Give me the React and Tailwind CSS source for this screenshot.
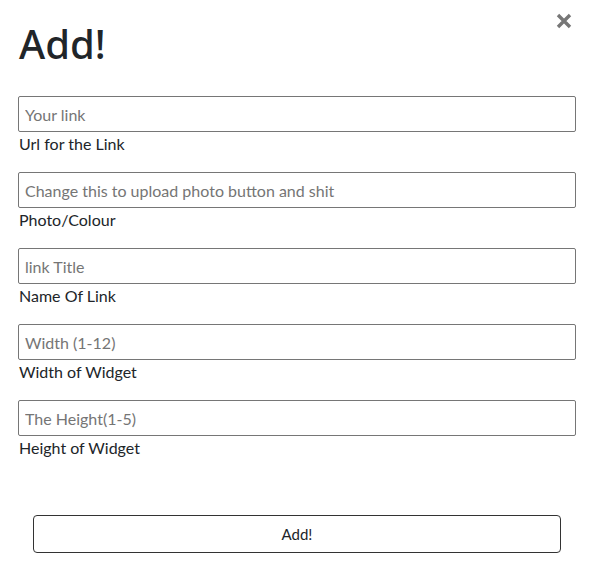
import { useState } from "react";

const fields = [
  { placeholder: "Your link", label: "Url for the Link" },
  { placeholder: "Change this to upload photo button and shit", label: "Photo/Colour" },
  { placeholder: "link Title", label: "Name Of Link" },
  { placeholder: "Width (1-12)", label: "Width of Widget" },
  { placeholder: "The Height(1-5)", label: "Height of Widget" },
];

const App = () => {
  const [values, setValues] = useState(fields.map(() => ""));

  return (
    <div className="w-[592px] h-[569px] bg-white text-[#212529] font-['Lato',sans-serif] flex flex-col pl-[18px] pr-[16px]">
      {/* header */}
      <div className="flex items-start justify-between">
        <h1 className="font-['Noto_Sans',sans-serif] text-[40px] leading-none font-medium mt-[24px] ml-[1px]">Add!</h1>
        <button className="mt-[13px] mr-[4px] text-[#777]">
          <svg width="16" height="16" viewBox="0 0 16 16">
            <path d="M2 2 L14 14 M14 2 L2 14" stroke="currentColor" strokeWidth="3.4" strokeLinecap="butt" />
          </svg>
        </button>
      </div>

      {/* form */}
      <div className="flex flex-col gap-4 mt-[32px]">
        {fields.map((f, i) => (
          <div key={f.label} className="flex flex-col">
            <input
              value={values[i]}
              onChange={(e) => {
                const next = [...values];
                next[i] = e.target.value;
                setValues(next);
              }}
              placeholder={f.placeholder}
              className="h-[36px] w-full border border-[#767676] rounded-[2px] px-[6px] text-[16px] placeholder:text-[#757575] outline-none"
            />
            <label className="text-[16px] leading-6 ml-[1px]">{f.label}</label>
          </div>
        ))}
      </div>

      <div className="flex justify-center mt-[55px]">
        <button className="w-[528px] h-[38px] border border-[#333] rounded-[4px] text-[15px] text-[#212529]">
          Add!
        </button>
      </div>
    </div>
  );
};

export default App;
